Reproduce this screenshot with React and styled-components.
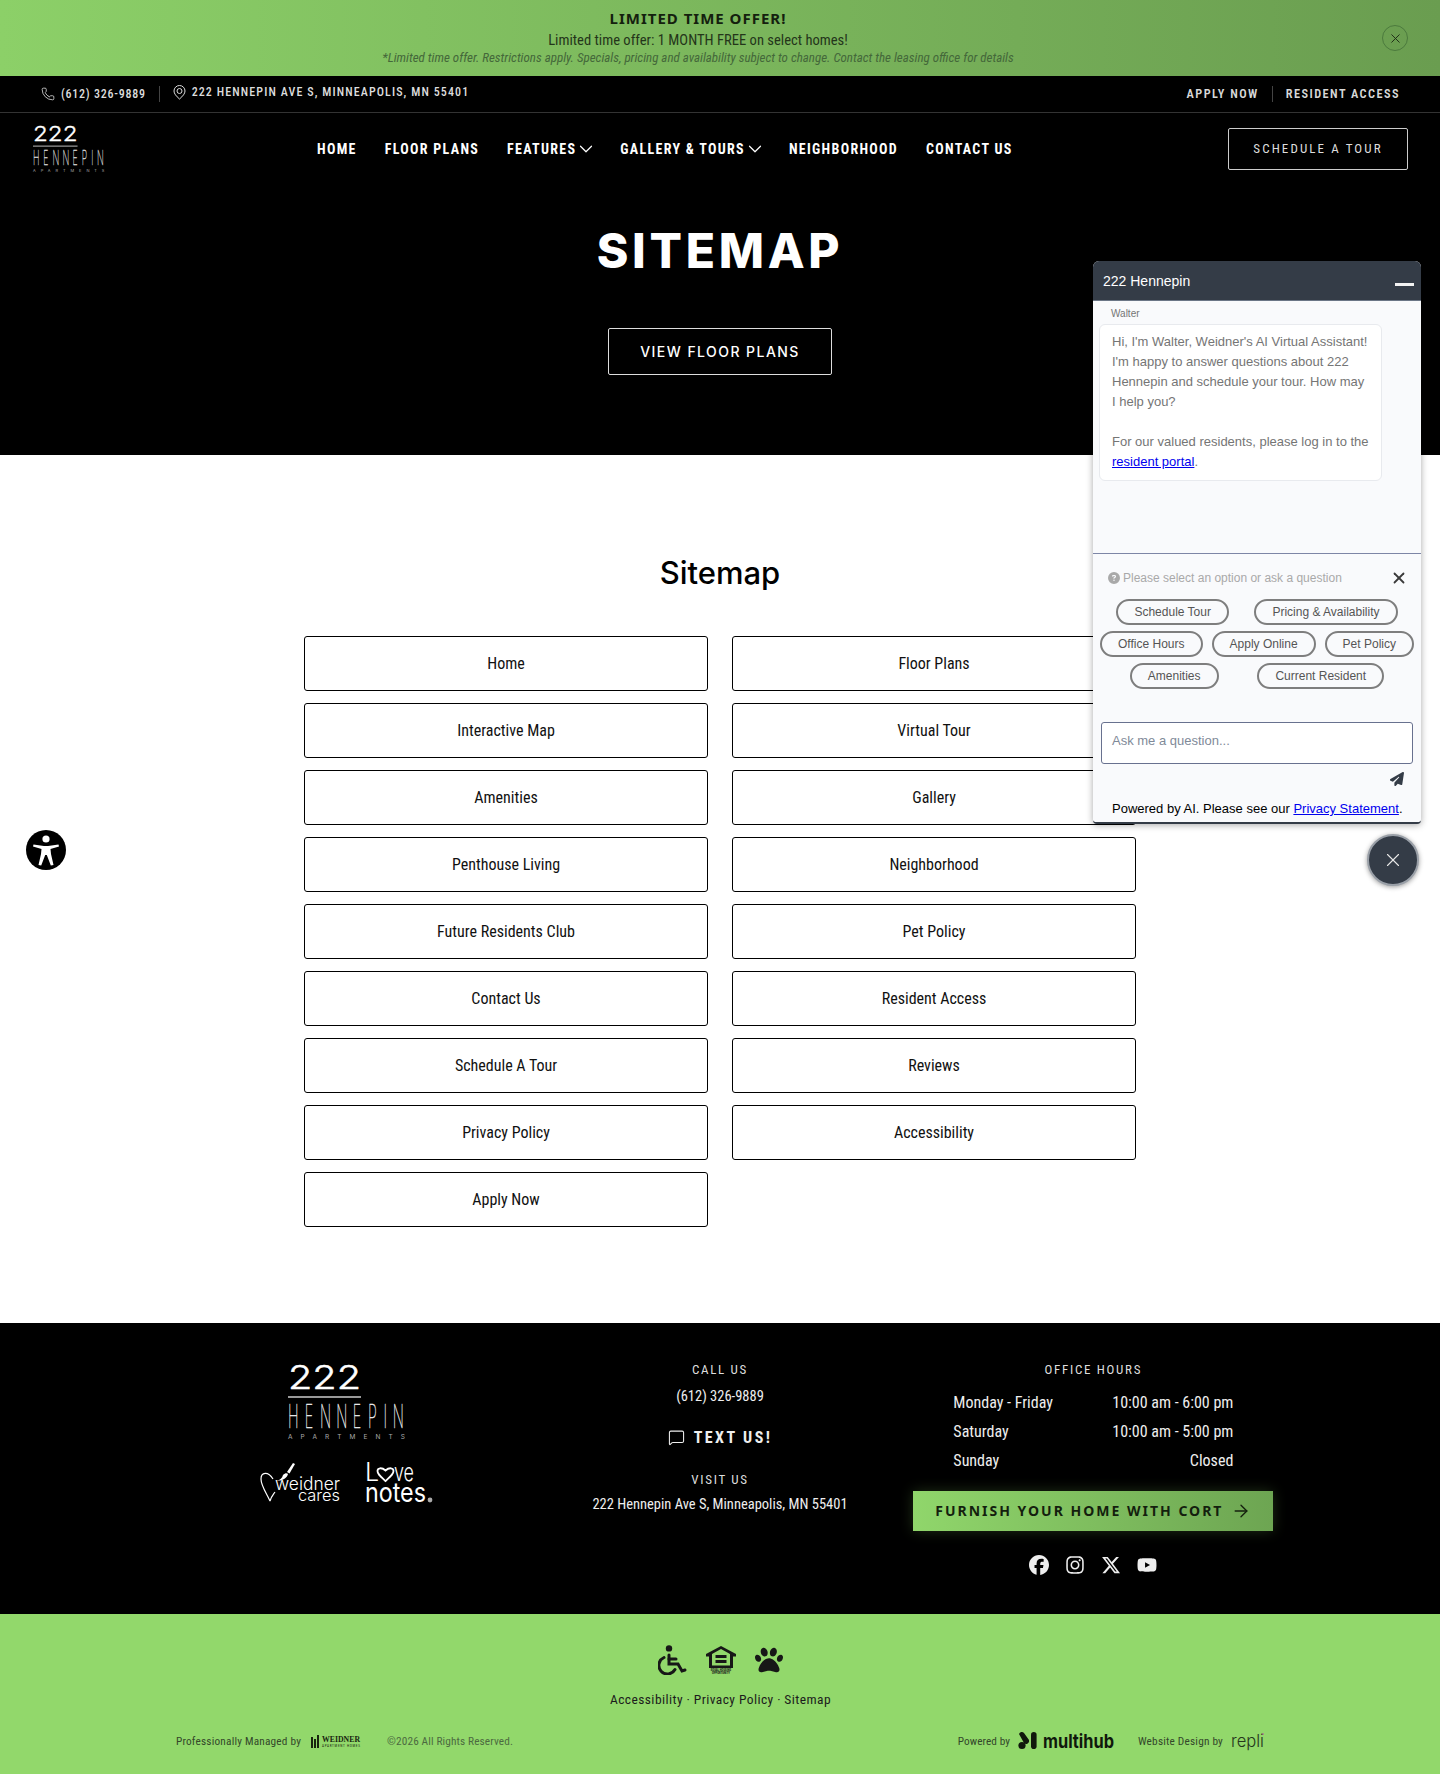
import React from "react";
import styled, { createGlobalStyle } from "styled-components";
import { Phone, X, ChevronDown, MessageSquare, ArrowRight } from "lucide-react";
import { FaFacebook, FaInstagram, FaXTwitter, FaYoutube, FaPaw, FaPaperPlane, FaCircleQuestion } from "react-icons/fa6";

const Global = createGlobalStyle`
  html, body { margin: 0; padding: 0; background: #fff; }
  body { font-family: Roboto, "Liberation Sans", sans-serif; font-stretch: 75%; color: #000; }
  * { box-sizing: border-box; }
`;

const Page = styled.div`position: relative; width: 1440px; height: 1774px; overflow: hidden;`;

/* promo */
const Promo = styled.div`
  height: 76px; display: flex; align-items: center; padding: 0 32px 0 14px;
  background: linear-gradient(90deg, #8cd068, #6a9d50); color: #1c2a14;
`;
const PromoText = styled.div`flex: 1; text-align: center; display: flex; flex-direction: column; align-items: center;`;
const PromoTitle = styled.div`font-size: 15px; font-weight: 700; letter-spacing: 1px; line-height: 19px; color: #14200e; font-stretch: 100%; font-family: "Noto Sans", sans-serif; margin-top:-1px;`;
const PromoLine = styled.div`font-size: 14.6px; line-height: 20px; margin-top: 2px; color: #24351a;`;
const PromoNote = styled.div`font-size: 13px; line-height: 16px; font-style: italic; color: #44683a;`;
const CircleClose = styled.div`
  width: 26px; height: 26px; border-radius: 50%; border: 1px solid #4b7a3d; display: flex; align-items: center; justify-content: center; color: #1c2a14;
`;

/* top bar */
const TopBar = styled.div`
  height: 37px; background: #000; border-bottom: 1px solid #333; display: flex; align-items: center; justify-content: space-between;
  padding: 0 40px 0 41px; color: #ddd; font-size: 12px; font-weight: 500;
`;
const TopGroup = styled.div`display: flex; align-items: center;`;
const TopItem = styled.span`display: inline-flex; align-items: center; gap: 6px; position: relative; letter-spacing: ${p => p.$up ? "1.1px" : ".75px"}; top: ${p => p.$up ? "-2px" : "0"};`;
const TopSep = styled.span`display: block; width: 1px; height: 16px; background: #444; margin: 0 13px;`;
const TopLink = styled.span`font-size: 12.3px; letter-spacing: 1.45px; font-weight: 600; color: #d8d8d8;`;

/* nav */
const Nav = styled.div`height: 76px; background: #000; display: flex; align-items: center; padding: 0 32px 4px 33px; color: #fff;`;
const NavLinks = styled.div`display: flex; align-items: center; gap: 28px; margin-left: 212px;`;
const NavLink = styled.span`display: inline-flex; align-items: center; font-size: 14px; font-weight: 700; letter-spacing: 1.3px;`;
const Chev = styled(ChevronDown)`margin: 0 -5px 0 -1px;`;
const TourBtn = styled.div`
  margin-left: auto; width: 180px; height: 42px; border: 1px solid #ccc; border-radius: 2px; display: flex; align-items: center; justify-content: center;
  font-size: 13px; letter-spacing: 2.1px; color: #ddd; padding-bottom: 2px;
`;

/* hero */
const Hero = styled.div`height: 266px; background: #000; display: flex; flex-direction: column; align-items: center; color: #fff; padding-top: 29px;`;
const HeroTitle = styled.h1`margin: 0; font-family: Inter, sans-serif; font-stretch: 100%; font-weight: 800; font-size: 48px; line-height: 66px; letter-spacing: 3.7px;`;
const HeroBtn = styled.div`
  margin-top: 44px; width: 224px; height: 47px; border: 1px solid #ddd; border-radius: 2px; display: flex; align-items: center; justify-content: center;
  font-size: 14px; font-weight: 500; letter-spacing: 1.45px; font-family: Inter, sans-serif; font-stretch: 100%;
`;

/* sitemap */
const Main = styled.div`height: 868px; padding-top: 98px; display: flex; flex-direction: column; align-items: center;`;
const MainTitle = styled.h2`margin: 0; font-family: Inter, sans-serif; font-stretch: 100%; font-weight: 500; font-size: 31px; line-height: 40px;`;
const LinkGrid = styled.div`display: grid; grid-template-columns: 404px 404px; gap: 12px 24px; margin-top: 43px;`;
const LinkBox = styled.div`
  height: 55px; border: 1px solid #000; border-radius: 3px; display: flex; align-items: center; justify-content: center; font-size: 16px; color: #111;
`;

/* footer */
const Footer = styled.div`height: 291px; background: #000; color: #fff; padding: 0 160px; display: grid; grid-template-columns: repeat(3, 1fr);`;
const Col = styled.div`display: flex; flex-direction: column; align-items: center; padding-top: ${p => p.$top || 0}px;`;
const LogoRow = styled.div`display: flex; align-items: flex-start; gap: 23px; margin-top: 22px;`;
const Eyebrow = styled.div`font-size: 13px; letter-spacing: 1.7px; line-height: 16px; color: #ddd; margin-top: ${p => p.$mt || 0}px;`;
const FootText = styled.div`font-size: 14.5px; line-height: 20px; color: #eee; margin-top: ${p => p.$mt || 0}px;`;
const TextUs = styled.div`display: flex; align-items: center; gap: 9px; font-size: 16px; font-weight: 700; letter-spacing: 2.4px; margin-top: 18px; height: 24px; color: #eee;`;
const Hours = styled.div`width: 280px; margin-top: 10px; display: flex; flex-direction: column;`;
const HourRow = styled.div`display: flex; justify-content: space-between; font-size: 16px; height: 29px; line-height: 29px; color: #eee;`;
const CortBtn = styled.div`
  width: 360px; height: 40px; margin-top: 16px; padding-bottom: 1px; display: flex; align-items: center; justify-content: center; gap: 8px;
  background: linear-gradient(90deg, #90d66b, #6da552); color: #141f0e; box-shadow: 0 0 14px rgba(146, 216, 107, .22);
  font-family: "Noto Sans", sans-serif; font-stretch: 100%; font-weight: 700; font-size: 14px; letter-spacing: 2px;
`;
const Socials = styled.div`display: flex; align-items: center; gap: 16px; margin-top: 24px; color: #eee; font-size: 20px; height: 20px;`;

/* legal */
const Legal = styled.div`height: 160px; background: #92d86b; color: #1a1a1a; display: flex; flex-direction: column; padding: 31px 175px 0 176px; align-items: center;`;
const LegalIcons = styled.div`display: flex; align-items: center; gap: 19px; height: 30px; color: #171717;`;
const LegalLinks = styled.div`font-size: 13.5px; letter-spacing: .42px; font-stretch: 85%; margin-top: 15px; line-height: 18px; color: #1c1c1c;`;
const LegalBottom = styled.div`align-self: stretch; display: flex; align-items: center; justify-content: space-between; margin-top: 20px; height: 26px; font-size: 11.3px; color: #33472a;`;
const LegalGroup = styled.div`display: flex; align-items: center; gap: ${p => p.$gap || 8}px;`;
const Copy = styled.span`margin-left: 16px; color: #4c6a40; letter-spacing: .13px;`;
const Small = styled.span`letter-spacing: ${p => p.$tight ? ".06px" : ".2px"};`;

/* chat */
const Chat = styled.div`
  position: absolute; top: 261px; left: 1093px; width: 328px; height: 563px; background: #f9fafc; border-radius: 6px 6px 4px 4px;
  border-bottom: 2px solid #343c47; box-shadow: 0 1px 7px rgba(0,0,0,.35); display: flex; flex-direction: column; font-family: "Liberation Sans", sans-serif; font-stretch: 100%;
`;
const ChatHead = styled.div`height: 40px; background: #343c47; color: #fff; border-radius: 6px 6px 0 0; border-bottom: 1px solid #6b7686; display: flex; align-items: center; justify-content: space-between; padding: 0 7px 0 10px; font-size: 14px;`;
const Minus = styled.span`display: block; width: 19px; height: 3px; background: #f2f2f2; margin-top: 7px;`;
const ChatBody = styled.div`height: 253px; padding: 6px 6px 0; border-bottom: 1px solid #7d86a6;`;
const Who = styled.div`font-size: 10px; line-height: 14px; color: #757575; margin-left: 12px;`;
const Bubble = styled.div`
  width: 283px; height: 157px; margin-top: 3px; background: #fff; border: 1px solid #e8eaee; border-radius: 6px; padding: 7px 12px; font-size: 13px; line-height: 20px; color: #757575;
`;
const Anchor = styled.a`color: #0000ee; text-decoration: underline;`;
const PromptRow = styled.div`display: flex; align-items: center; justify-content: space-between; padding: 9px 13px 0 15px; height: 38px; font-size: 12px; color: #a9a9a9;`;
const Prompt = styled.span`display: inline-flex; align-items: center; gap: 3px;`;
const Chips = styled.div`display: flex; flex-wrap: wrap; justify-content: space-evenly; gap: 6px 0; padding-top: 7px; height: 130px; align-content: flex-start;`;
const Chip = styled.span`height: 26px; margin: 0 2px; border: 2px solid #7e7e7e; border-radius: 13px; padding: 0 16px; font-size: 12px; line-height: 22px; color: #555; white-space: nowrap;`;
const AskBox = styled.div`margin: 0 8px; height: 42px; background: #fff; border: 1px solid #68718f; border-radius: 3px; padding: 0 10px 5px; display: flex; align-items: center; font-size: 13px; color: #7f8a99;`;
const SendRow = styled.div`display: flex; justify-content: flex-end; padding: 8px 17px 0 0; height: 28px; color: #343c47; font-size: 14px;`;
const Power = styled.div`padding: 9px 0 0 19px; font-size: 13px; line-height: 16px; color: #000;`;
const Fab = styled.div`
  position: absolute; left: 1367px; top: 834px; width: 52px; height: 52px; border-radius: 50%; background: #343c47; border: 2px solid #9aa0a8;
  box-shadow: 0 1px 5px rgba(0,0,0,.4); color: #e8e8e8; display: flex; align-items: center; justify-content: center;
`;
const A11y = styled.div`position: absolute; left: 26px; top: 830px; width: 40px; height: 40px; border-radius: 50%; background: #000; display: flex; align-items: center; justify-content: center;`;

/* drawn logos */
const BrandMark = ({ w }) => (
  <svg width={w} height={w * 76 / 118} viewBox="0 0 118 76" fill="#fff" overflow="visible" aria-hidden="true">
    <text x="0" y="25" fontFamily="Inter, sans-serif" fontSize="33" fontWeight="300" textLength="73" lengthAdjust="spacingAndGlyphs" stroke="#fff" strokeWidth=".5">222</text>
    <rect x="0" y="32" width="73" height="2" fill="#999" />
    <text
      y="64"
      x="0 37 71 107 144 178 212 233"
      transform="scale(.45 1)"
      fontFamily="Inter, sans-serif"
      fontSize="32"
      fontWeight="100"
      fill="#eee"
      stroke="#eee"
      strokeWidth=".5"
    >HENNEPIN</text>
    <text x="0" y="75" fontFamily="Inter, sans-serif" fontSize="6.5" fill="#aaa" textLength="117" lengthAdjust="spacing">APARTMENTS</text>
  </svg>
);

const WeidnerCares = () => (
  <svg width="82" height="42" viewBox="0 0 82 42" fill="none" overflow="visible" aria-hidden="true">
    <path d="M10 39 C7 32 1 24 1 17 C1 10 8 9 13 17 M10 39 C11 35 13 33 15 30" stroke="#fff" strokeWidth="1.2" />
    <path d="M15 18 C19 19 22 17 23 13 C25 11 27 11 28 12 C27 16 22 20 15 18 Z" fill="#fff" />
    <path d="M27 10 L33 1 L35 2 L29.5 11.5 Z" fill="#fff" />
    <text x="15" y="28" fontFamily="Inter, sans-serif" fontSize="18" fontWeight="300" fill="#fff" textLength="65" lengthAdjust="spacingAndGlyphs">weidner</text>
    <text x="38" y="39" fontFamily="Inter, sans-serif" fontSize="16" fontWeight="300" fill="#fff" textLength="42" lengthAdjust="spacingAndGlyphs">cares</text>
  </svg>
);
const LoveNotes = () => (
  <svg width="68" height="42" viewBox="0 0 68 42" fill="#fff" overflow="visible" aria-hidden="true">
    <text x="0" y="19" fontFamily="Inter, sans-serif" fontSize="25" fontWeight="300">L</text>
    <path d="M20.5 19 C15 14 12.5 12 12.5 9 C12.5 6 16.5 5 20.5 8.5 C24.5 5 28.5 6 28.5 9 C28.5 12 26 14 20.5 19 Z" fill="none" stroke="#fff" strokeWidth="1.8" />
    <text x="29" y="19" fontFamily="Inter, sans-serif" fontSize="25" fontWeight="300" textLength="20" lengthAdjust="spacingAndGlyphs">ve</text>
    <text x="0" y="40" fontFamily="Inter, sans-serif" fontSize="27" fontWeight="400" textLength="61" lengthAdjust="spacingAndGlyphs">notes</text>
    <circle cx="65" cy="38" r="2.4" fill="#aaa" />
  </svg>
);
const PinRing = () => (
  <svg width="13" height="15" viewBox="0 0 13 15" fill="none" stroke="#ddd" strokeWidth="1" aria-hidden="true">
    <path d="M6.5 14 C3 11 1 8.5 1 6 a5.5 5.5 0 0 1 11 0 C12 8.5 10 11 6.5 14 Z" />
    <circle cx="6.5" cy="6" r="2.5" />
  </svg>
);
const Wheelchair = () => (
  <svg width="29" height="30" viewBox="0 0 29 30" aria-hidden="true" fill="none" stroke="#171717" strokeWidth="3" strokeLinecap="round">
    <circle cx="11" cy="3.4" r="3.2" fill="#171717" stroke="none" />
    <path d="M11 10 V19 H20 L24 26 L27 25" />
    <path d="M11 14 H18" />
    <path d="M6 12.5 A8.6 8.6 0 1 0 17 24.5" />
  </svg>
);
const EqualHousing = () => (
  <svg width="30" height="28" viewBox="0 0 30 28" aria-hidden="true" fill="#171717">
    <path d="M15 0 L30 8 L30 10.5 L27 10.5 L27 22 L3 22 L3 10.5 L0 10.5 L0 8 Z M15 3 L6 8 L6 19.5 L24 19.5 L24 8 Z" fillRule="evenodd" />
    <rect x="9.5" y="9" width="11" height="3" />
    <rect x="9.5" y="14" width="11" height="3" />
    <text x="15" y="25" textAnchor="middle" fontFamily="Roboto, sans-serif" fontSize="3" fontWeight="700">EQUAL HOUSING</text>
    <text x="15" y="28" textAnchor="middle" fontFamily="Roboto, sans-serif" fontSize="3" fontWeight="700">OPPORTUNITY</text>
  </svg>
);
const WeidnerMark = () => (
  <svg width="50" height="14" viewBox="0 0 50 14" overflow="visible" aria-hidden="true" fill="#18240f">
    <rect x="0" y="3" width="2" height="11" /><rect x="3" y="5" width="2" height="9" /><rect x="6" y="1" width="2" height="13" />
    <text x="11" y="8" fontFamily="Liberation Serif, serif" fontSize="9" fontWeight="700" textLength="38" lengthAdjust="spacingAndGlyphs">WEIDNER</text>
    <text x="11" y="13" fontFamily="Roboto, sans-serif" fontSize="3.4" textLength="38" lengthAdjust="spacing">APARTMENT HOMES</text>
  </svg>
);
const Multihub = () => (
  <svg width="97" height="18" viewBox="0 0 97 18" overflow="visible" aria-hidden="true" fill="#10180c">
    <path d="M1 2 a3 3 0 0 1 5 -1 L11 8 a3 3 0 0 1 -5 3 Z" />
    <circle cx="4" cy="13.5" r="3.6" />
    <rect x="13" y="0" width="5.6" height="17" rx="2.8" />
    <text x="25" y="16" fontFamily="Inter, sans-serif" fontSize="19" fontWeight="700" textLength="71" lengthAdjust="spacingAndGlyphs">multihub</text>
  </svg>
);
const Repli = () => (
  <svg width="34" height="20" viewBox="0 0 34 20" overflow="visible" aria-hidden="true">
    <text x="0" y="15.5" fontFamily="Inter, sans-serif" fontSize="17" fontWeight="300" fill="#26361c" textLength="33" lengthAdjust="spacingAndGlyphs">repli</text>
    <circle cx="32" cy="3" r=".8" fill="#c04a9a" />
  </svg>
);
const A11yFigure = () => (
  <svg width="30" height="32" viewBox="0 0 30 32" aria-hidden="true" fill="#fff">
    <circle cx="15" cy="5" r="3.6" />
    <path d="M2.5 10.5 L13 12 H17 L27.5 10.5 L28 12.5 L19.5 15 L20 20 L22.5 31 L19.8 31.5 L15.8 21 H14.2 L10.2 31.5 L7.5 31 L10 20 L10.5 15 L2 12.5 Z" />
  </svg>
);

const links = ["Home","Floor Plans","Interactive Map","Virtual Tour","Amenities","Gallery","Penthouse Living","Neighborhood","Future Residents Club","Pet Policy","Contact Us","Resident Access","Schedule A Tour","Reviews","Privacy Policy","Accessibility","Apply Now"];
const chips = ["Schedule Tour","Pricing & Availability","Office Hours","Apply Online","Pet Policy","Amenities","Current Resident"];
const hours = [["Monday - Friday","10:00 am - 6:00 pm"],["Saturday","10:00 am - 5:00 pm"],["Sunday","Closed"]];

export default function App() {
  return (
    <Page>
      <Global />
      <Promo>
        <PromoText>
          <PromoTitle>LIMITED TIME OFFER!</PromoTitle>
          <PromoLine>Limited time offer: 1 MONTH FREE on select homes!</PromoLine>
          <PromoNote>*Limited time offer. Restrictions apply. Specials, pricing and availability subject to change. Contact the leasing office for details</PromoNote>
        </PromoText>
        <CircleClose><X size={15} strokeWidth={1.5} /></CircleClose>
      </Promo>
      <TopBar>
        <TopGroup>
          <TopItem><Phone size={14} strokeWidth={1.4} />(612) 326-9889</TopItem>
          <TopSep />
          <TopItem $up><PinRing />222 HENNEPIN AVE S, MINNEAPOLIS, MN 55401</TopItem>
        </TopGroup>
        <TopGroup>
          <TopLink>APPLY NOW</TopLink>
          <TopSep />
          <TopLink>RESIDENT ACCESS</TopLink>
        </TopGroup>
      </TopBar>
      <Nav>
        <BrandMark w={72} />
        <NavLinks>
          <NavLink>HOME</NavLink>
          <NavLink>FLOOR PLANS</NavLink>
          <NavLink>FEATURES<Chev size={22} strokeWidth={1.3} /></NavLink>
          <NavLink>GALLERY &amp; TOURS<Chev size={22} strokeWidth={1.3} /></NavLink>
          <NavLink>NEIGHBORHOOD</NavLink>
          <NavLink>CONTACT US</NavLink>
        </NavLinks>
        <TourBtn>SCHEDULE A TOUR</TourBtn>
      </Nav>
      <Hero>
        <HeroTitle>SITEMAP</HeroTitle>
        <HeroBtn>VIEW FLOOR PLANS</HeroBtn>
      </Hero>
      <Main>
        <MainTitle>Sitemap</MainTitle>
        <LinkGrid>
          {links.map(l => <LinkBox key={l}>{l}</LinkBox>)}
        </LinkGrid>
      </Main>
      <Footer>
        <Col $top={41}>
          <BrandMark w={118} />
          <LogoRow>
            <WeidnerCares />
            <LoveNotes />
          </LogoRow>
        </Col>
        <Col $top={39}>
          <Eyebrow>CALL US</Eyebrow>
          <FootText $mt={9}>(612) 326-9889</FootText>
          <TextUs><MessageSquare size={17} strokeWidth={1.5} />TEXT US!</TextUs>
          <Eyebrow $mt={23}>VISIT US</Eyebrow>
          <FootText $mt={7}>222 Hennepin Ave S, Minneapolis, MN 55401</FootText>
        </Col>
        <Col $top={39}>
          <Eyebrow>OFFICE HOURS</Eyebrow>
          <Hours>
            {hours.map(([d, t]) => <HourRow key={d}><span>{d}</span><span>{t}</span></HourRow>)}
          </Hours>
          <CortBtn>FURNISH YOUR HOME WITH CORT<ArrowRight size={20} strokeWidth={1.6} /></CortBtn>
          <Socials><FaFacebook /><FaInstagram /><FaXTwitter /><FaYoutube /></Socials>
        </Col>
      </Footer>
      <Legal>
        <LegalIcons>
          <Wheelchair />
          <EqualHousing />
          <FaPaw size={28} />
        </LegalIcons>
        <LegalLinks>Accessibility · Privacy Policy · Sitemap</LegalLinks>
        <LegalBottom>
          <LegalGroup $gap={10}>
            <Small>Professionally Managed by</Small>
            <WeidnerMark />
            <Copy>©2026 All Rights Reserved.</Copy>
          </LegalGroup>
          <LegalGroup $gap={23}>
            <LegalGroup><Small $tight>Powered by</Small><Multihub /></LegalGroup>
            <LegalGroup><Small>Website Design by</Small><Repli /></LegalGroup>
          </LegalGroup>
        </LegalBottom>
      </Legal>
      <A11y><A11yFigure /></A11y>
      <Chat>
        <ChatHead>222 Hennepin<Minus /></ChatHead>
        <ChatBody>
          <Who>Walter</Who>
          <Bubble>
            Hi, I'm Walter, Weidner's AI Virtual Assistant! I'm happy to answer questions about 222 Hennepin and schedule your tour. How may I help you?<br /><br />
            For our valued residents, please log in to the <Anchor>resident portal</Anchor>.
          </Bubble>
        </ChatBody>
        <PromptRow>
          <Prompt><FaCircleQuestion size={12} />Please select an option or ask a question</Prompt>
          <X size={18} strokeWidth={2.4} color="#3a3a3a" />
        </PromptRow>
        <Chips>
          {chips.map(c => <Chip key={c}>{c}</Chip>)}
        </Chips>
        <AskBox>Ask me a question...</AskBox>
        <SendRow><FaPaperPlane /></SendRow>
        <Power>Powered by AI. Please see our <Anchor>Privacy Statement</Anchor>.</Power>
      </Chat>
      <Fab><X size={22} strokeWidth={1.2} /></Fab>
    </Page>
  );
}
